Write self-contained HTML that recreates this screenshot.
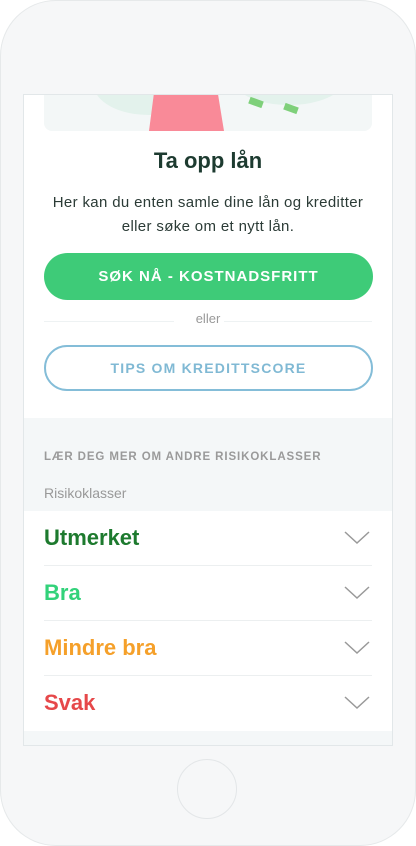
<!DOCTYPE html>
<html><head><meta charset="utf-8"><style>
*{margin:0;padding:0;box-sizing:border-box}
body{width:416px;height:846px;background:#fff;font-family:"Liberation Sans",sans-serif;position:relative;overflow:hidden}
.phone{position:absolute;left:0;top:0;width:416px;height:846px;background:#f6f7f8;border-radius:56px;box-shadow:inset 0 0 0 1px #e6e9ea}
.screen{position:absolute;left:23px;top:94px;width:370px;height:652px;background:#fff;border:1px solid #e2e7e9;overflow:hidden}
.abs{position:absolute}
.t{position:absolute;left:0;width:368px;text-align:center}
.row{position:absolute;left:20px;width:328px;height:55px;border-bottom:1px solid #eceff0}
.row span{position:absolute;left:0;top:14px;font-size:22px;font-weight:bold}
.row svg{position:absolute;right:2px;top:20px}
</style></head><body>
<div class="phone"></div>
<div class="screen">
 <div class="abs" style="left:20px;top:-10px;width:328px;height:46px;background:#f3f7f7;border-radius:8px;overflow:hidden">
  <div class="abs" style="left:50px;top:-30px;width:110px;height:60px;background:#e3f2ec;border-radius:50%"></div>
  <div class="abs" style="left:190px;top:-30px;width:110px;height:50px;background:#e3f2ec;border-radius:50%"></div>
  <div class="abs" style="left:105px;top:0;width:75px;height:46px;background:#f98a98;clip-path:polygon(8% 0,90% 0,100% 100%,0 100%)"></div>
  <div class="abs" style="left:205px;top:14px;width:14px;height:7px;background:#7ed07a;transform:rotate(20deg)"></div>
  <div class="abs" style="left:240px;top:20px;width:14px;height:7px;background:#7ed07a;transform:rotate(20deg)"></div>
 </div>
 <div class="t" style="top:53px;font-size:22px;font-weight:bold;color:#1d3b30">Ta opp lån</div>
 <div class="t" style="top:96px;font-size:15px;line-height:24px;color:#2b3b36;letter-spacing:0.35px">Her kan du enten samle dine lån og kreditter<br>eller søke om et nytt lån.</div>
 <div class="abs" style="left:20px;top:158px;width:329px;height:47px;background:#3ecb78;border-radius:24px;color:#fff;font-weight:bold;font-size:15px;letter-spacing:1px;text-align:center;line-height:47px">SØK NÅ - KOSTNADSFRITT</div>
 <div class="abs" style="left:20px;top:226px;width:130px;height:1px;background:#eef2f3"></div>
 <div class="abs" style="left:200px;top:226px;width:148px;height:1px;background:#eef2f3"></div>
 <div class="t" style="top:216px;font-size:13px;color:#999">eller</div>
 <div class="abs" style="left:20px;top:250px;width:329px;height:46px;border:2px solid #84bdd8;border-radius:24px;color:#80b9d4;font-weight:bold;font-size:14px;letter-spacing:1.2px;text-align:center;line-height:42px">TIPS OM KREDITTSCORE</div>
 <div class="abs" style="left:0;top:323px;width:368px;height:93px;background:#f4f7f8"></div>
 <div class="abs" style="left:20px;top:356px;font-size:11.5px;font-weight:bold;color:#9a9a9a;letter-spacing:.9px">LÆR DEG MER OM ANDRE RISIKOKLASSER</div>
 <div class="abs" style="left:20px;top:390px;font-size:14px;color:#999">Risikoklasser</div>
 <div class="row" style="top:416px"><span style="color:#1d7a2e">Utmerket</span><svg width="26" height="14"><path d="M1 1L13 12L25 1" fill="none" stroke="#999" stroke-width="1.5"/></svg></div>
 <div class="row" style="top:471px"><span style="color:#32d27a">Bra</span><svg width="26" height="14"><path d="M1 1L13 12L25 1" fill="none" stroke="#999" stroke-width="1.5"/></svg></div>
 <div class="row" style="top:526px"><span style="color:#f5a02a">Mindre bra</span><svg width="26" height="14"><path d="M1 1L13 12L25 1" fill="none" stroke="#999" stroke-width="1.5"/></svg></div>
 <div class="row" style="top:581px;border-bottom:none"><span style="color:#e6484a">Svak</span><svg width="26" height="14"><path d="M1 1L13 12L25 1" fill="none" stroke="#999" stroke-width="1.5"/></svg></div>
 <div class="abs" style="left:0;top:636px;width:368px;height:16px;background:#f4f7f8"></div>
</div>
<div class="abs" style="left:177px;top:759px;width:60px;height:60px;border:1.5px solid #e3e6e8;border-radius:50%"></div>
</body></html>
